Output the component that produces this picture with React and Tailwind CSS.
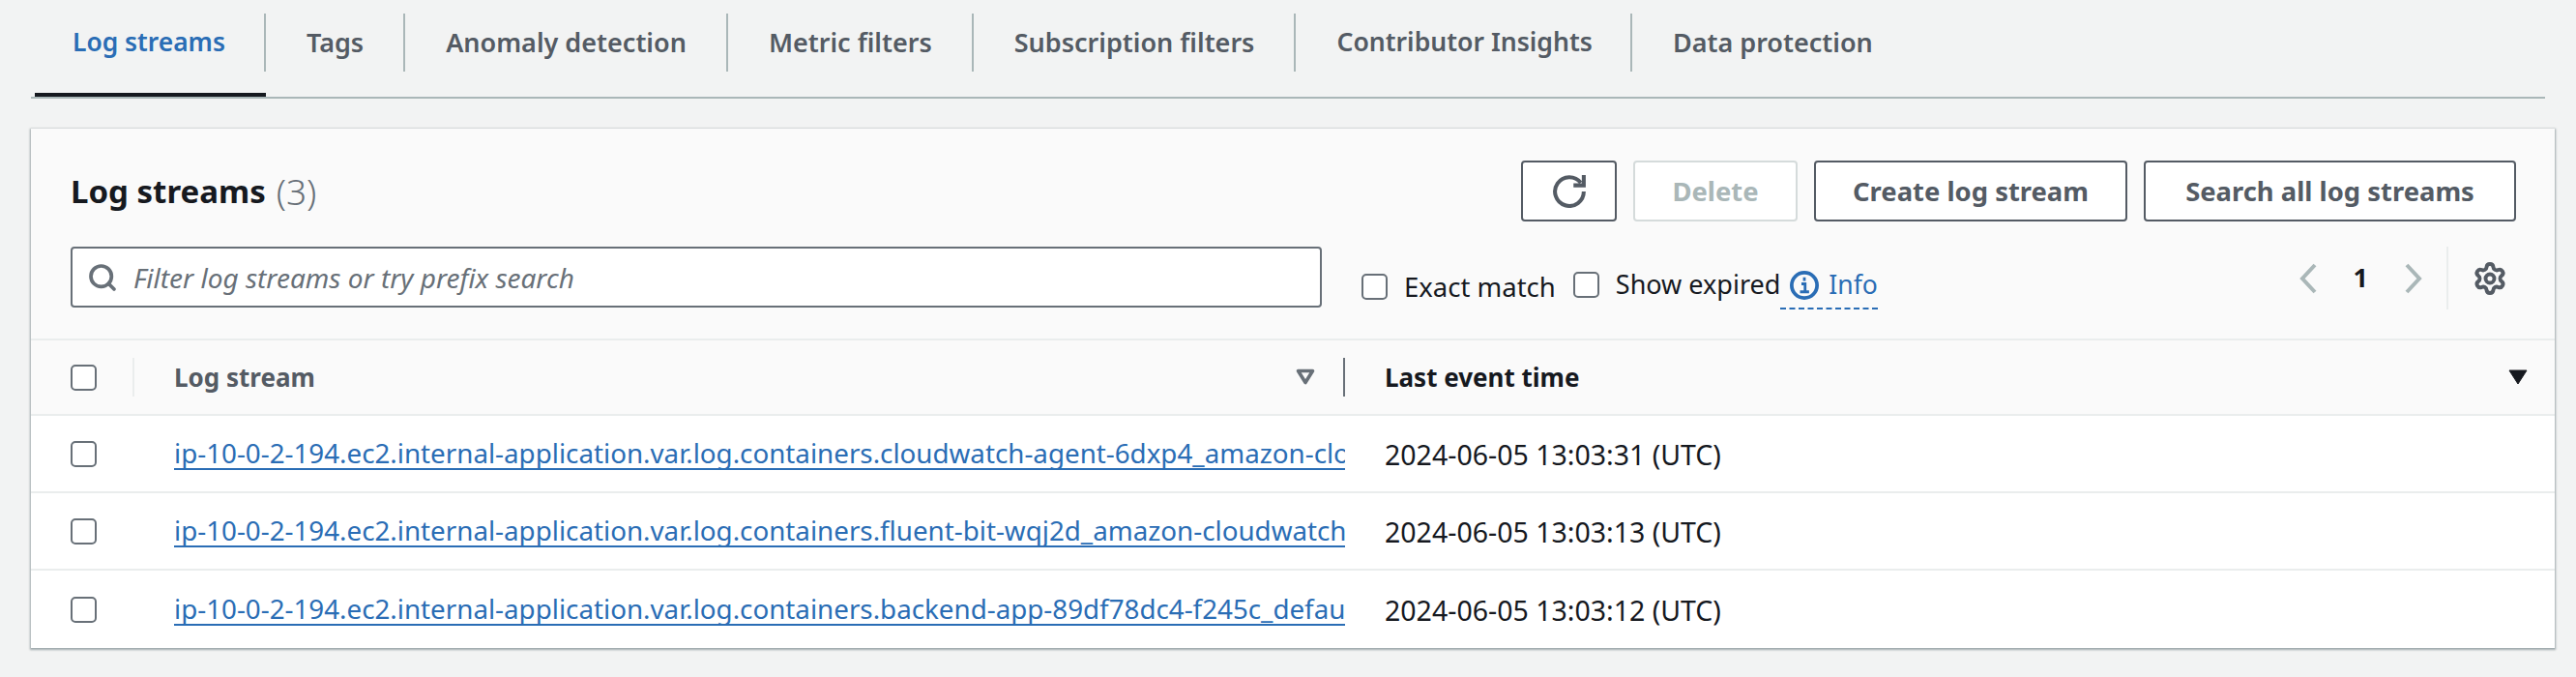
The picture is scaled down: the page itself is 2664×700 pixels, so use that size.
import React from 'react';
import { Search, Settings } from 'lucide-react';

const TABS = ['Log streams', 'Tags', 'Anomaly detection', 'Metric filters', 'Subscription filters', 'Contributor Insights', 'Data protection'];

const ROWS = [
  ['ip-10-0-2-194.ec2.internal-application.var.log.containers.cloudwatch-agent-6dxp4_amazon-cloudwatch_cloudwatch-agent', '2024-06-05 13:03:31 (UTC)'],
  ['ip-10-0-2-194.ec2.internal-application.var.log.containers.fluent-bit-wqj2d_amazon-cloudwatch_fluent-bit', '2024-06-05 13:03:13 (UTC)'],
  ['ip-10-0-2-194.ec2.internal-application.var.log.containers.backend-app-89df78dc4-f245c_default_backend-app', '2024-06-05 13:03:12 (UTC)'],
];

const Checkbox = () => (
  <span className="block w-[27px] h-[27px] shrink-0 rounded-[5px] border-2 border-[#687078] bg-white" />
);

const Button = ({ children, className = '' }) => (
  <button className={`h-[63px] flex items-center justify-center rounded-[4px] border-2 border-[#545b64] bg-white text-[#545b64] font-bold text-[27.4px] ${className}`}>
    {children}
  </button>
);

const Refresh = () => (
  <svg width="34" height="34" viewBox="0 0 16 16" fill="none" stroke="#545b64" strokeWidth="1.9">
    <path d="M10 5h5V0" />
    <path d="M15 8a7 7 0 1 1-1.46-4.25" />
  </svg>
);

const InfoIcon = () => (
  <svg width="30" height="30" viewBox="0 0 16 16" fill="none" stroke="#2a6db5" strokeWidth="2">
    <circle cx="8" cy="8" r="7" />
    <path d="M8 3.6v2M6.4 7.2H8.4v4M5.6 11.6h5" strokeWidth="1.5" />
  </svg>
);

const Chevron = ({ d }) => (
  <svg width="20" height="32" viewBox="0 0 20 32" fill="none" stroke="#aab7b8" strokeWidth="4">
    <path d={d} />
  </svg>
);

function App() {
  return (
    <div className="h-[700px] bg-[#f2f3f3] px-8 font-['Noto_Sans',sans-serif] text-[26px] overflow-hidden">
      {/* tabs */}
      <div className="flex h-[102px] border-b-2 border-[#aab7b8]">
        {TABS.map((tab, i) => (
          <div key={tab} className={`h-full pb-[26px] pt-[14px] ${i === 0 ? 'border-b-4 border-[#16191f] ml-[4px]' : ''}`}>
            <div className={`h-[60px] flex items-center font-semibold ${i === 0 ? 'pl-[39px] pr-[40px] text-[26.4px]' : 'pl-[42px] pr-[41px] text-[27px]'} ${i === 5 ? '!text-[26.6px] !pr-[39px]' : ''} ${i === TABS.length - 1 ? '' : 'border-r-2 border-[#aab7b8]'} ${i === 0 ? 'text-[#2a6db5]' : 'text-[#545b64]'}`}>
              {tab}
            </div>
          </div>
        ))}
      </div>

      {/* card */}
      <div className="mt-[31px] w-[2610px] bg-white shadow-[0_1px_2px_1px_rgba(0,28,36,0.35)]">
        <div className="h-[219px] bg-[#fafafa] border-b-2 border-[#eaeded] px-[41px] pt-[33px]">
          <div className="flex justify-between h-[63px]">
            <div className="flex items-center text-[33px] font-bold text-[#16191f]">
              Log streams<span className="ml-[11px] text-[37px] font-light text-[#687078]">(3)</span>
            </div>
            <div className="flex gap-[17px] -mr-[1px]">
              <Button className="w-[99px]"><Refresh /></Button>
              <Button className="w-[170px] !border-[#d5dbdb] !text-[#aab7b8]">Delete</Button>
              <Button className="w-[324px]">Create log stream</Button>
              <Button className="w-[385px]">Search all log streams</Button>
            </div>
          </div>
          <div className="flex mt-[26px]">
            <div className="w-[1294px] h-[63px] rounded-[4px] border-2 border-[#687078] bg-white flex items-center pl-[15px]">
              <Search size={32} strokeWidth={2.8} className="text-[#687078]" />
              <span className="ml-[16px] italic text-[#687078] text-[28px]">Filter log streams or try prefix search</span>
            </div>
            <div className="flex items-center h-[63px] ml-[41px] mt-[8px] text-[#16191f] text-[27.5px]">
              <div className="flex items-center pt-[4px]">
                <Checkbox /><span className="ml-[17px]">Exact match</span>
              </div>
              <span className="ml-[18px]"><Checkbox /></span><span className="ml-[17px] text-[27px]">Show expired</span>
              <span className="pl-[10px] flex items-center gap-[10px] text-[26.5px] text-[#2a6db5] border-b-2 border-dashed border-[#2a6db5] pb-[4px] -mb-[6px]">
                <InfoIcon />
                Info
              </span>
            </div>
            <div className="ml-auto flex items-center h-[65px]">
              <Chevron d="M17 2 4 16l13 14" />
              <span className="mx-[37px] text-[27px] font-bold text-[#16191f]">1</span>
              <Chevron d="M3 2l13 14L3 30" />
              <div className="ml-[24px] h-[65px] w-[2px] bg-[#eaeded]" />
              <Settings size={36} strokeWidth={2.6} className="ml-[25px] mr-[8px] text-[#545b64]" />
            </div>
          </div>
        </div>

        {/* table header */}
        <div className="h-[78px] bg-[#fafafa] border-b-2 border-[#eaeded] flex items-center font-bold">
          <div className="w-[107px] pl-[41px] h-10 flex items-center border-r-2 border-[#eaeded]"><Checkbox /></div>
          <div className="w-[1252px] pl-[41px] pr-[28px] h-10 flex items-center justify-between border-r-2 border-[#687078] text-[#545b64]">
            <span className="pt-[1px]">Log stream</span>
            <svg width="22" height="18" viewBox="0 0 22 18"><path d="M3.5 2.5h15L11 14.5z" fill="none" stroke="#687078" strokeWidth="3.6" strokeLinejoin="round" /></svg>
          </div>
          <div className="flex-1 pl-[41px] pr-[27px] flex items-center justify-between text-[#16191f]">
            <span className="pt-[1px]">Last event time</span>
            <svg width="22" height="18" viewBox="0 0 22 18"><path d="M2 2h18l-9 14z" fill="#16191f" stroke="#16191f" strokeLinejoin="round" /></svg>
          </div>
        </div>

        {/* rows */}
        {ROWS.map(([name, time], i) => (
          <div key={name} className={`h-[80px] flex items-center first:h-[81px] ${i < ROWS.length - 1 ? 'border-b-2 border-[#eaeded]' : ''}`}>
            <div className="w-[148px] pl-[41px] pt-[1px]"><Checkbox /></div>
            <div className="w-[1211px] pt-[3px] pb-[3px] overflow-hidden whitespace-nowrap text-[#2a6db5] text-[27.75px] underline decoration-2 underline-offset-[5px] [text-decoration-skip-ink:none]">{name}</div>
            <div className="pl-[41px] pt-[2px] text-[#16191f] text-[28.5px]">{time}</div>
          </div>
        ))}
      </div>
    </div>
  );
}

export default App;
